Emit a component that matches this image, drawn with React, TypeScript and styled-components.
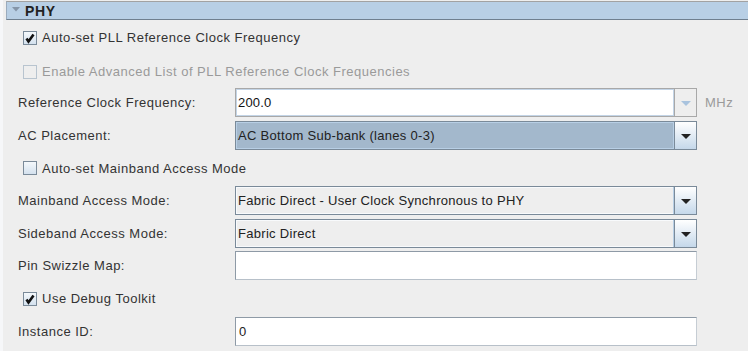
import React from 'react'
import styled, { createGlobalStyle } from 'styled-components'

const GlobalStyle = createGlobalStyle`
html, body {
  margin: 0;
  padding: 0;
  background: #eeeeee;
}
body {
  font-family: "Liberation Sans", Arial, sans-serif;
  font-size: 13px;
  letter-spacing: 0.5px;
  color: #333333;
}
`

const Arrow = ({ color }: { color: string }) => (
  <svg width="10" height="6" viewBox="0 0 10 6">
    <path d="M0 0 L10 0 L5 5 Z" fill={color} />
  </svg>
)

const Check = ({ checked, disabled }: { checked?: boolean; disabled?: boolean }) => (
  <Box $disabled={disabled}>
    {checked && (
      <svg width="12" height="12" viewBox="0 0 12 12">
        <path d="M2.5 6.5 L4.5 9.5 L9.5 2.5" stroke="#111" strokeWidth="2.6" fill="none" />
      </svg>
    )}
  </Box>
)

type ComboProps = { value: string; selected?: boolean }

const Combo = ({ value, selected }: ComboProps) => (
  <ComboWrap $selected={selected}>
    <ComboText>{value}</ComboText>
    <ComboButton>
      <Arrow color="#222" />
    </ComboButton>
  </ComboWrap>
)

const App = () => {
  return (
    <Page>
      <GlobalStyle />
      <Header>
        <HeaderArrow>
          <svg width="8" height="5" viewBox="0 0 8 5">
            <path d="M0 0 L8 0 L4 4.5 Z" fill="#8595a8" />
          </svg>
        </HeaderArrow>
        <HeaderTitle>PHY</HeaderTitle>
      </Header>
      <Body>
        <CheckRow $h={35}>
          <Check checked />
          <CheckLabel>Auto-set PLL Reference Clock Frequency</CheckLabel>
        </CheckRow>
        <CheckRow $h={33}>
          <Check disabled />
          <CheckLabel $disabled>Enable Advanced List of PLL Reference Clock Frequencies</CheckLabel>
        </CheckRow>
        <FieldRow $after={4}>
          <Label>Reference Clock Frequency:</Label>
          <DisabledCombo>
            <EditText>200.0</EditText>
            <DisabledButton>
              <Arrow color="#a9c3de" />
            </DisabledButton>
          </DisabledCombo>
          <Unit>MHz</Unit>
        </FieldRow>
        <FieldRow $after={0}>
          <Label>AC Placement:</Label>
          <Combo value="AC Bottom Sub-bank (lanes 0-3)" selected />
        </FieldRow>
        <CheckRow $h={36}>
          <Check />
          <CheckLabel>Auto-set Mainband Access Mode</CheckLabel>
        </CheckRow>
        <FieldRow $after={4}>
          <Label>Mainband Access Mode:</Label>
          <Combo value="Fabric Direct - User Clock Synchronous to PHY" />
        </FieldRow>
        <FieldRow $after={3}>
          <Label>Sideband Access Mode:</Label>
          <Combo value="Fabric Direct" />
        </FieldRow>
        <FieldRow $after={0}>
          <Label>Pin Swizzle Map:</Label>
          <TextField />
        </FieldRow>
        <CheckRow $h={37}>
          <Check checked />
          <CheckLabel>Use Debug Toolkit</CheckLabel>
        </CheckRow>
        <FieldRow $after={0}>
          <Label>Instance ID:</Label>
          <TextField>0</TextField>
        </FieldRow>
      </Body>
    </Page>
  )
}

const Page = styled.div`
width: 748px;
height: 351px;
overflow: hidden;
background: #eeeeee;
border-left: 3px solid #f6f7f9;
box-sizing: border-box;
`

const Header = styled.div`
margin: 1px 0 0 3px;
height: 17px;
display: flex;
align-items: center;
background: #b8cfe5;
border-top: 1px solid #a2a2a2;
border-bottom: 1px solid #6f7f8f;
border-left: 1px solid #9aabbd;
`

const HeaderArrow = styled.span`
display: flex;
width: 18px;
justify-content: center;
margin-top: -2px;
`

const HeaderTitle = styled.span`
font-weight: bold;
font-size: 14px;
letter-spacing: 0.6px;
color: #222;
`

const Body = styled.div`
display: flex;
flex-direction: column;
`

const CheckRow = styled.div<{ $h: number }>`
height: ${p => p.$h}px;
display: flex;
align-items: center;
padding-left: 20px;
gap: 5px;
`

const Box = styled.span<{ $disabled?: boolean }>`
width: 14px;
height: 14px;
box-sizing: border-box;
display: flex;
align-items: center;
justify-content: center;
border: 1px solid ${p => (p.$disabled ? '#b8c4cf' : '#7a8a99')};
background: ${p => (p.$disabled ? '#eeeeee' : 'linear-gradient(#f4f8fb, #d4e1ee)')};
`

const CheckLabel = styled.span<{ $disabled?: boolean }>`
color: ${p => (p.$disabled ? '#9a9a9a' : '#333')};
`

const FieldRow = styled.div<{ $after: number }>`
height: 29px;
margin-bottom: ${p => p.$after}px;
display: grid;
grid-template-columns: 217px 462px auto;
align-items: center;
padding-left: 15px;
`

const Label = styled.span`
color: #333;
`

const ComboWrap = styled.div<{ $selected?: boolean }>`
height: 29px;
box-sizing: border-box;
display: flex;
border: 1px solid #7a8a99;
background: ${p => (p.$selected ? '#a3b8cc' : '#eeeeee')};
box-shadow: inset 0 0 0 1px ${p => (p.$selected ? '#b8cfe5' : '#f8fafc')};
`

const ComboText = styled.span`
flex: 1;
display: flex;
align-items: center;
padding-left: 2px;
letter-spacing: 0.3px;
color: #222;
border-right: 1px solid #7a8a99;
box-shadow: inset -1px 0 0 #b8cfe5;
`

const ComboButton = styled.span`
width: 21px;
display: flex;
align-items: center;
justify-content: center;
background: linear-gradient(#ffffff, #c5d8ea);
padding-top: 2px;
`

const DisabledCombo = styled.div`
height: 29px;
box-sizing: border-box;
display: flex;
border: 1px solid #a8a8a8;
background: #ffffff;
`

const EditText = styled.span`
flex: 1;
display: flex;
align-items: center;
padding-left: 2px;
letter-spacing: 0.2px;
color: #111;
border-right: 1px solid #a8a8a8;
box-shadow: inset 0 0 0 1px #c3d4e6;
`

const DisabledButton = styled.span`
width: 21px;
display: flex;
align-items: center;
justify-content: center;
background: #eeeeee;
padding-top: 2px;
`

const Unit = styled.span`
color: #9a9a9a;
padding-left: 8px;
`

const TextField = styled.div`
height: 29px;
box-sizing: border-box;
display: flex;
align-items: center;
padding-left: 3px;
background: #ffffff;
color: #222;
border: 1px solid #8e9aa6;
border-right-color: #c6cdd4;
border-bottom-color: #b7c0c9;
`

export default App
